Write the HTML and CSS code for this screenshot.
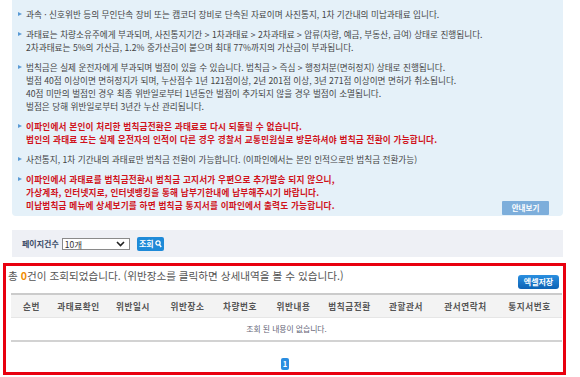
FILE: index.html
```html
<!DOCTYPE html>
<html lang="ko">
<head>
<meta charset="utf-8">
<title>과태료 조회</title>
<link rel="stylesheet" href="styles.css">
</head>
<body>
<div class="page">
  <div class="notice">
    <ul class="notice-list">
      <li>과속 · 신호위반 등의 무인단속 장비 또는 캠코더 장비로 단속된 자료이며 사진통지, 1차 기간내의 미납과태료 입니다.</li>
      <li>과태료는 차량소유주에게 부과되며, 사진통지기간 &gt; 1차과태료 &gt; 2차과태료 &gt; 압류(차량, 예금, 부동산, 급여) 상태로 진행됩니다.<br>2차과태료는 5%의 가산금, 1.2% 중가산금이 붙으며 최대 77%까지의 가산금이 부과됩니다.</li>
      <li>범칙금은 실제 운전자에게 부과되며 벌점이 있을 수 있습니다. 범칙금 &gt; 즉심 &gt; 행정처분(면허정지) 상태로 진행됩니다.<br>벌점 40점 이상이면 면허정지가 되며, 누산점수 1년 121점이상, 2년 201점 이상, 3년 271점 이상이면 면허가 취소됩니다.<br>40점 미만의 벌점인 경우 최종 위반일로부터 1년동안 벌점이 추가되지 않을 경우 벌점이 소멸됩니다.<br>벌점은 당해 위반일로부터 3년간 누산 관리됩니다.</li>
      <li class="warn">이파인에서 본인이 처리한 범칙금전환은 과태료로 다시 되돌릴 수 없습니다.<br>법인의 과태료 또는 실제 운전자의 인적이 다른 경우 경찰서 교통민원실로 방문하셔야 범칙금 전환이 가능합니다.</li>
      <li>사전통지, 1차 기간내의 과태료만 범칙금 전환이 가능합니다. (이파인에서는 본인 인적으로만 범칙금 전환가능)</li>
      <li class="warn">이파인에서 과태료를 범칙금전환시 범칙금 고지서가 우편으로 추가발송 되지 않으니,<br>가상계좌, 인터넷지로, 인터넷뱅킹을 통해 납부기한내에 납부해주시기 바랍니다.<br>미납범칙금 메뉴에 상세보기를 하면 범칙금 통지서를 이파인에서 출력도 가능합니다.</li>
    </ul>
    <button class="guide-btn" type="button">안내보기</button>
  </div>

  <div class="pager-bar">
    <span class="pager-label">페이지건수</span>
    <div class="select">
      <span class="select-value">10개</span>
      <svg class="select-arrow" width="9" height="6" viewBox="0 0 9 6"><path d="M1 1 L4.5 4.5 L8 1" fill="none" stroke="#222" stroke-width="1.6"/></svg>
    </div>
    <button class="search-btn" type="button">조회<svg width="7" height="8" viewBox="0 0 7 8"><circle cx="3" cy="3" r="2.1" fill="none" stroke="#fff" stroke-width="1.3"/><path d="M4.4 4.6 L6.2 7" stroke="#fff" stroke-width="1.4"/></svg></button>
  </div>

  <div class="result">
    <div class="result-top">
      <p class="result-count">총 <span class="count">0</span>건이 조회되었습니다. (위반장소를 클릭하면 상세내역을 볼 수 있습니다.)</p>
      <button class="excel-btn" type="button">엑셀저장</button>
    </div>
    <table class="grid">
      <colgroup>
        <col style="width:41px"><col style="width:53px"><col style="width:56px"><col style="width:53px"><col style="width:52px">
        <col style="width:55px"><col style="width:57px"><col style="width:56px"><col style="width:63px"><col style="width:65px">
      </colgroup>
      <thead>
        <tr><th>순번</th><th>과태료확인</th><th>위반일시</th><th>위반장소</th><th>차량번호</th><th>위반내용</th><th>범칙금전환</th><th>관할관서</th><th>관서연락처</th><th>통지서번호</th></tr>
      </thead>
      <tbody>
        <tr><td colspan="10" class="empty">조회 된 내용이 없습니다.</td></tr>
      </tbody>
    </table>
    <div class="pagination"><span class="page-num">1</span></div>
  </div>
</div>
</body>
</html>
```
FILE: styles.css
```css
* { box-sizing: border-box; }
html, body { margin: 0; padding: 0; background: #fff; }
body {
  font-family: "Noto Sans CJK KR", "Noto Sans", sans-serif;
  color: #444;
  width: 580px;
  height: 377px;
  overflow: hidden;
}
.page { width: 580px; }

.notice {
  position: relative;
  margin-left: 12px;
  width: 551px;
  height: 216px;
  background: #e5f1f9;
  border-radius: 0 0 4px 4px;
  padding: 8px 8px 0 6px;
}
.notice-list {
  list-style: none;
  margin: 0;
  padding: 0;
  display: flex;
  flex-direction: column;
  gap: 7px;
}
.notice-list li {
  display: flex;
  font-size: 8.65px;
  line-height: 13px;
  color: #444;
  white-space: nowrap;
}
.notice-list li::before {
  content: "";
  flex: 0 0 auto;
  width: 0;
  height: 0;
  margin: 4px 4px 0 0;
  border-left: 4px solid #5b9bd5;
  border-top: 2.5px solid transparent;
  border-bottom: 2.5px solid transparent;
}
.notice-list li.warn {
  color: #d0121b;
  font-weight: 700;
  letter-spacing: 0.2px;
}
.guide-btn {
  position: absolute;
  right: 14px;
  bottom: 1px;
  width: 47px;
  height: 14px;
  border: 0;
  border-radius: 1px;
  background: #7daedb;
  color: #fff;
  font-family: inherit;
  font-size: 7.5px;
  font-weight: 700;
  padding: 0;
  line-height: 14px;
}

.pager-bar {
  margin: 14px 0 0 12px;
  width: 551px;
  height: 27px;
  background: #eef0f5;
  display: flex;
  align-items: center;
  padding-left: 10px;
}
.pager-label {
  font-size: 8px;
  color: #3a4a66;
  font-weight: 700;
  margin-right: 3px;
}
.select {
  width: 68px;
  height: 12px;
  background: #fff;
  border: 1px solid #8a8a8a;
  display: flex;
  align-items: center;
  justify-content: space-between;
  padding: 0 4px 0 2px;
}
.select-value { font-size: 8.5px; color: #333; line-height: 10px; }
.search-btn {
  margin-left: 7px;
  height: 14px;
  width: 27px;
  border: 0;
  border-radius: 2px;
  background: #1e8ad8;
  color: #fff;
  font-family: inherit;
  font-size: 8px;
  font-weight: 700;
  padding: 0;
  display: flex;
  align-items: center;
  justify-content: center;
  gap: 1px;
}

.result {
  margin: 6px 0 0 3px;
  width: 563px;
  height: 112px;
  border: 3px solid #e8000f;
  padding: 0 1px 0 2px;
}
.result-top {
  display: flex;
  justify-content: space-between;
  align-items: flex-start;
  padding-top: 3px;
  height: 27px;
}
.result-count {
  margin: 0;
  font-size: 10.6px;
  line-height: 13px;
  color: #555;
}
.count { color: #f08c00; font-weight: 700; }
.excel-btn {
  margin: 6px 3px 0 0;
  width: 41px;
  height: 14px;
  border: 0;
  border-radius: 3px;
  background: linear-gradient(#2a8fe0, #0c62b4);
  color: #fff;
  font-family: inherit;
  font-size: 8px;
  font-weight: 700;
  padding: 0;
  line-height: 14px;
}

.grid {
  margin-left: 3px;
  width: 551px;
  border-collapse: collapse;
  table-layout: fixed;
  border-top: 2px solid #cbcbcb;
  border-bottom: 2px solid #d2d2d2;
}
.grid th {
  height: 23px;
  background: #f3f3f3;
  border-bottom: 1px solid #e6e6e6;
  font-size: 8.6px;
  font-weight: 700;
  color: #555;
  letter-spacing: 0.6px;
  padding: 0;
  white-space: nowrap;
}
.grid td.empty {
  height: 24px;
  text-align: center;
  font-size: 7.8px;
  color: #667;
  padding: 0;
}
.pagination {
  display: flex;
  justify-content: center;
  margin-top: 16px;
}
.page-num {
  width: 8px;
  height: 12px;
  background: #2a8de0;
  border-radius: 2px;
  color: #fff;
  font-size: 7.5px;
  font-weight: 700;
  line-height: 12px;
  text-align: center;
}
```
